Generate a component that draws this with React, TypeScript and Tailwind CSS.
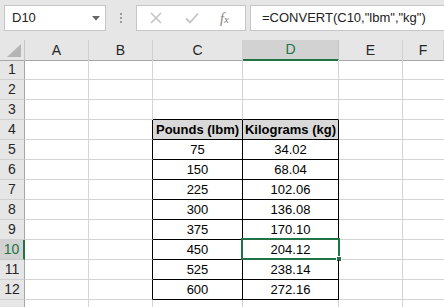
import React from 'react';

const rows: { n: number; c?: string; d?: string }[] = [
  { n: 1 },
  { n: 2 },
  { n: 3 },
  { n: 4, c: 'Pounds (lbm)', d: 'Kilograms (kg)' },
  { n: 5, c: '75', d: '34.02' },
  { n: 6, c: '150', d: '68.04' },
  { n: 7, c: '225', d: '102.06' },
  { n: 8, c: '300', d: '136.08' },
  { n: 9, c: '375', d: '170.10' },
  { n: 10, c: '450', d: '204.12' },
  { n: 11, c: '525', d: '238.14' },
  { n: 12, c: '600', d: '272.16' },
  { n: 13 },
];

const cols = ['A', 'B', 'C', 'D', 'E', 'F'];

export default function App() {
  return (
    <div
      className="w-[444px] h-[307px] overflow-hidden bg-white text-black"
      style={{ fontFamily: '"Liberation Sans", Arial, sans-serif' }}
    >
      {/* Formula bar */}
      <div className="h-[40px] bg-[#e6e6e6] flex items-start pt-[5px]">
        <div className="ml-[4px] w-[102px] h-[26px] bg-white border border-[#c6c6c6] flex items-center justify-between pl-[7px] pr-[5px]">
          <span className="text-[13px] text-[#222]">D10</span>
          <svg width="8" height="5" viewBox="0 0 8 5">
            <path d="M0 0h8L4 4.5z" fill="#666" />
          </svg>
        </div>
        <div className="w-[30px] h-[26px] flex flex-col items-center justify-center gap-[2px]">
          <span className="w-[2px] h-[2px] bg-[#9a9a9a]" />
          <span className="w-[2px] h-[2px] bg-[#9a9a9a]" />
          <span className="w-[2px] h-[2px] bg-[#9a9a9a]" />
        </div>
        <div className="w-[110px] h-[26px] bg-white border border-[#c6c6c6] flex items-center">
          <svg className="ml-[13px]" width="12" height="12" viewBox="0 0 12 12">
            <path d="M1 1l10 10M11 1L1 11" stroke="#c4c4c4" strokeWidth="1.6" />
          </svg>
          <svg className="ml-[23px]" width="14" height="12" viewBox="0 0 14 12">
            <path d="M1 6.5l4 4L13 1.5" stroke="#c4c4c4" strokeWidth="1.8" fill="none" />
          </svg>
          <span
            className="ml-[21px] text-[14px] italic text-[#808080]"
            style={{ fontFamily: '"Liberation Serif", "Times New Roman", serif' }}
          >
            f<span className="text-[11px]">x</span>
          </span>
        </div>
        <div className="ml-[4px] flex-1 h-[26px] bg-white border border-r-0 border-[#c6c6c6] flex items-center pl-[11px]">
          <span className="text-[13px] text-[#222] whitespace-nowrap">=CONVERT(C10,"lbm","kg")</span>
        </div>
      </div>

      {/* Grid */}
      <div className="grid grid-cols-[25px_64px_64px_90px_96px_64px_1fr] auto-rows-[20px]">
        {/* column headers */}
        <div className="h-[21px] bg-[#e6e6e6] border-r border-b border-r-[#c6c6c6] border-b-[#a6a6a6] relative">
          <svg className="absolute right-[3px] bottom-[3px]" width="14" height="13" viewBox="0 0 14 13">
            <path d="M14 0v13H0z" fill="#b5b5b5" />
          </svg>
        </div>
        {cols.map((c) =>
          c === 'D' ? (
            <div
              key={c}
              className="h-[21px] bg-[#d2d2d2] border-r border-r-[#c6c6c6] border-b-2 border-b-[#217346] flex items-center justify-center text-[14px] text-[#217346]"
            >
              {c}
            </div>
          ) : (
            <div
              key={c}
              className="h-[21px] bg-[#e6e6e6] border-r border-b border-r-[#d0d0d0] border-b-[#a6a6a6] flex items-center justify-center text-[14px] text-[#262626]"
            >
              {c}
            </div>
          )
        )}

        {rows.map((r) => {
          const inTable = r.c !== undefined;
          const header = r.n === 4;
          const sel = r.n === 10;
          return (
            <React.Fragment key={r.n}>
              {sel ? (
                <div className="bg-[#d2d2d2] border-b border-b-[#c6c6c6] border-r-2 border-r-[#217346] flex items-center justify-center text-[14px] text-[#217346]">
                  {r.n}
                </div>
              ) : (
                <div className="bg-[#e6e6e6] border-r border-b border-r-[#a6a6a6] border-b-[#d0d0d0] flex items-center justify-center text-[14px] text-[#262626]">
                  {r.n < 13 ? r.n : null}
                </div>
              )}
              <div className="border-r border-b border-[#d4d4d4]" />
              <div
                className={
                  inTable
                    ? 'border-r border-b border-r-black border-b-[#d4d4d4]'
                    : 'border-r border-b border-[#d4d4d4]'
                }
              />
              {inTable ? (
                <div
                  className={
                    header
                      ? 'border-r border-b border-black bg-[#d9d9d9] flex items-center justify-center text-[13px] font-bold whitespace-nowrap'
                      : 'border-r border-b border-black flex items-center justify-center text-[13px]'
                  }
                >
                  {r.c}
                </div>
              ) : (
                <div
                  className={
                    r.n === 3
                      ? 'border-r border-b border-r-[#d4d4d4] border-b-black'
                      : 'border-r border-b border-[#d4d4d4]'
                  }
                />
              )}
              {inTable ? (
                <div
                  className={
                    header
                      ? 'border-r border-b border-black bg-[#d9d9d9] flex items-center justify-center text-[13px] font-bold whitespace-nowrap'
                      : 'relative border-r border-b border-black flex items-center justify-center text-[13px]'
                  }
                >
                  {r.d}
                  {sel && (
                    <>
                      <div className="absolute -left-[2px] -top-[2px] -right-[2px] -bottom-[1px] border-2 border-[#217346]" />
                      <div className="absolute -right-[4px] -bottom-[3px] w-[6px] h-[6px] bg-[#217346] border border-white" />
                    </>
                  )}
                </div>
              ) : (
                <div
                  className={
                    r.n === 3
                      ? 'border-r border-b border-r-[#d4d4d4] border-b-black'
                      : 'border-r border-b border-[#d4d4d4]'
                  }
                />
              )}
              <div className="border-r border-b border-[#d4d4d4]" />
              <div className="border-b border-[#d4d4d4]" />
            </React.Fragment>
          );
        })}
      </div>
    </div>
  );
}
